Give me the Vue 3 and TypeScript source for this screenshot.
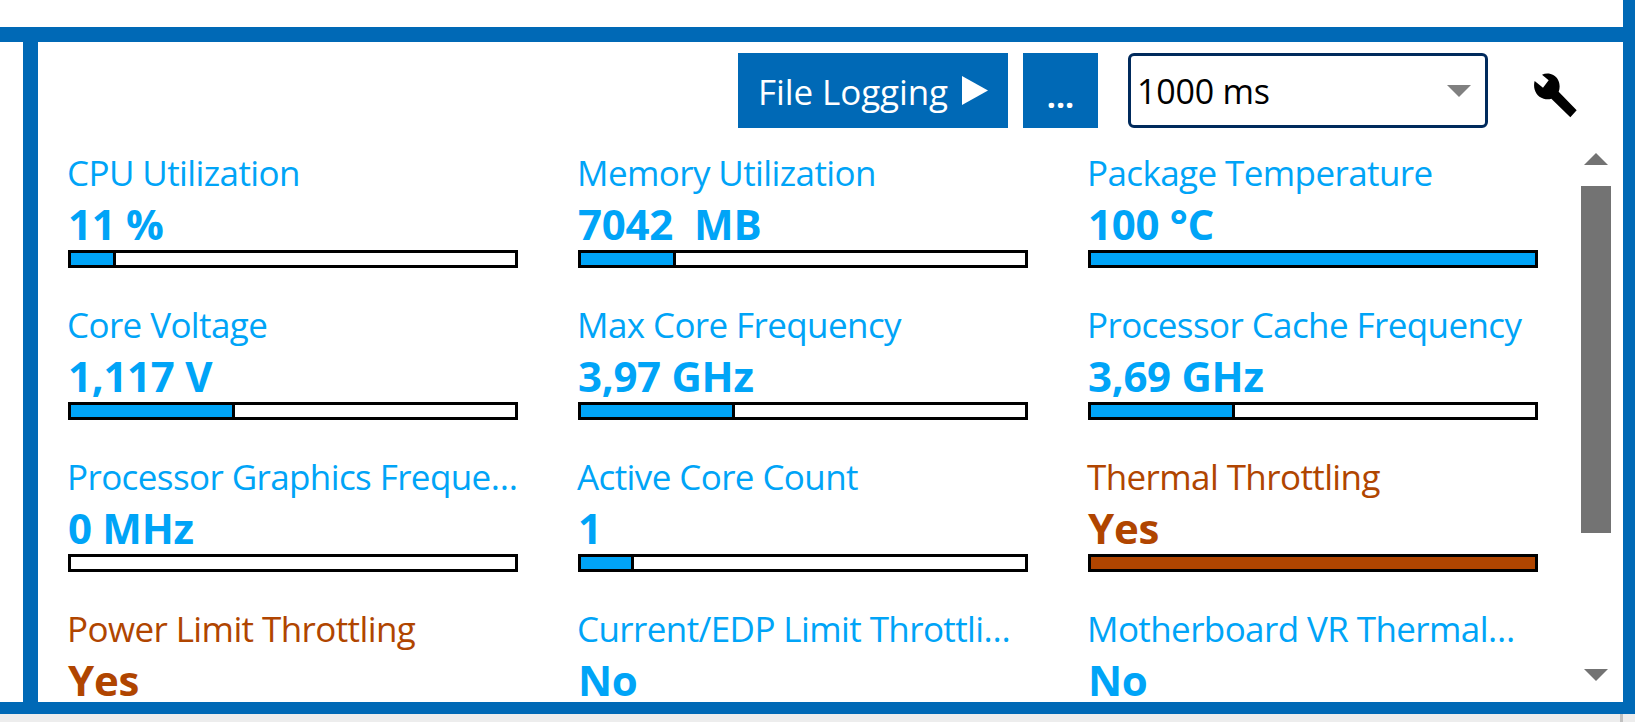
<script setup lang="ts">
interface Metric {
  label: string;
  value: string;
  pct?: number;
  alert?: boolean;
}

const metrics: Metric[] = [
  { label: 'CPU Utilization', value: '11 %', pct: 10.1 },
  { label: 'Memory Utilization', value: '7042\u00a0 MB', pct: 21.3 },
  { label: 'Package Temperature', value: '100 °C', pct: 100 },
  { label: 'Core Voltage', value: '1,117 V', pct: 36.9 },
  { label: 'Max Core Frequency', value: '3,97 GHz', pct: 34.7 },
  { label: 'Processor Cache Frequency', value: '3,69 GHz', pct: 32.4 },
  { label: 'Processor Graphics Freque…', value: '0 MHz', pct: 0 },
  { label: 'Active Core Count', value: '1', pct: 12 },
  { label: 'Thermal Throttling', value: 'Yes', pct: 100, alert: true },
  { label: 'Power Limit Throttling', value: 'Yes', pct: 100, alert: true },
  { label: 'Current/EDP Limit Throttli…', value: 'No', pct: 0 },
  { label: 'Motherboard VR Thermal…', value: 'No', pct: 0 },
];
</script>

<template>
  <div class="page">
    <div class="frame">
      <div class="top-space"></div>
      <div class="hbar top-bar"></div>
      <div class="middle">
        <div class="panel">
          <div class="toolbar">
            <button class="btn btn-log">
              <span>File Logging</span>
              <svg width="26" height="29" viewBox="0 0 26 29"><polygon points="0,0 26,14.5 0,29" fill="#fff" /></svg>
            </button>
            <button class="btn btn-more">...</button>
            <div class="select">
              <span>1000 ms</span>
              <svg width="24" height="12" viewBox="0 0 24 12"><polygon points="0,0 24,0 12,12" fill="#808080" /></svg>
            </div>
            <svg class="wrench" width="45" height="45" viewBox="400 128 135 135">
              <path d="M427 133 L447 150 L430 172 L405 152 C399 172 408 198 432 205 C440 207 448 207 455 205 L512 261 L531 240 L477 184 C484 165 478 145 462 135 C451 128 438 128 427 133 Z" fill="#000" />
            </svg>
          </div>
          <div class="body">
            <div class="grid">
              <div v-for="m in metrics" :key="m.label" class="metric" :class="{ alert: m.alert }">
                <div class="label">{{ m.label }}</div>
                <div class="value">{{ m.value }}</div>
                <div class="meter">
                  <div
                    class="fill"
                    :class="{ full: m.pct === 100, empty: !m.pct }"
                    :style="{ width: m.pct + '%' }"
                  ></div>
                </div>
              </div>
            </div>
            <div class="scrollbar">
              <svg width="24" height="12" viewBox="0 0 24 12"><polygon points="12,0 24,12 0,12" fill="#737373" /></svg>
              <div class="thumb"></div>
              <svg class="arrow-down" width="24" height="12" viewBox="0 0 24 12"><polygon points="0,0 24,0 12,12" fill="#737373" /></svg>
            </div>
          </div>
        </div>
      </div>
      <div class="hbar bottom-bar"></div>
    </div>
    <div class="footer"><div class="footer-mark"></div></div>
  </div>
</template>

<style>
html,
body {
  margin: 0;
  overflow: hidden;
}
</style>

<style scoped>
.page {
  width: 1635px;
  height: 722px;
  background: #ededed;
  display: flex;
  flex-direction: column;
  font-family: "Open Sans", "Noto Sans", sans-serif;
}
.frame {
  height: 714px;
  box-sizing: border-box;
  border-right: 12px solid #0069b6;
  background: #fff;
  display: flex;
  flex-direction: column;
}
.top-space {
  height: 27px;
  flex: none;
}
.hbar {
  flex: none;
  background: #0069b6;
}
.top-bar {
  height: 15px;
}
.bottom-bar {
  height: 12px;
}
.middle {
  flex: 1;
  min-height: 0;
  padding-left: 23px;
  display: flex;
}
.panel {
  flex: 1;
  min-width: 0;
  border-left: 15px solid #0069b6;
  display: flex;
  flex-direction: column;
}
.toolbar {
  flex: none;
  height: 75px;
  padding-top: 11px;
  padding-right: 45px;
  display: flex;
  justify-content: flex-end;
  align-items: flex-start;
}
.btn {
  height: 75px;
  border: none;
  padding: 0;
  background: #0069b6;
  color: #fff;
  font-family: inherit;
  display: flex;
  align-items: center;
  justify-content: center;
}
.btn-log {
  width: 270px;
  gap: 14px;
  font-size: 35px;
  letter-spacing: -0.1px;
}
.btn-log span {
  margin-top: 2px;
}
.btn-more {
  width: 75px;
  margin-left: 15px;
  padding-top: 10px;
  box-sizing: border-box;
  font-size: 32px;
  font-weight: 700;
}
.select {
  width: 360px;
  height: 75px;
  box-sizing: border-box;
  margin-left: 30px;
  border: 3px solid #002a5c;
  border-radius: 6px;
  padding: 0 14px 0 6px;
  display: flex;
  align-items: center;
  justify-content: space-between;
  font-size: 34px;
  letter-spacing: -0.2px;
  color: #000;
}
.wrench {
  margin-left: 45px;
  margin-top: 20px;
}
.body {
  flex: 1;
  min-height: 0;
  display: flex;
  overflow: hidden;
}
.grid {
  flex: 1;
  min-width: 0;
  padding: 20px 0 0 30px;
  display: grid;
  grid-template-columns: repeat(3, 450px);
  grid-auto-rows: 152px;
  column-gap: 60px;
}
.metric {
  color: #00a4f7;
  white-space: nowrap;
}
.metric.alert {
  color: #b04500;
}
.label {
  height: 52px;
  line-height: 50px;
  font-size: 35px;
  letter-spacing: -0.6px;
  margin-left: -1px;
}
.value {
  height: 50px;
  line-height: 48px;
  font-size: 42px;
  font-weight: 700;
  letter-spacing: -0.3px;
}
.meter {
  height: 18px;
  box-sizing: border-box;
  border: 3px solid #000;
  background: #fff;
}
.fill {
  height: 100%;
  box-sizing: border-box;
  background: #00a4f7;
  border-right: 3px solid #000;
}
.alert .fill {
  background: #b04500;
}
.fill.full,
.fill.empty {
  border-right: none;
}
.scrollbar {
  flex: none;
  width: 30px;
  margin-right: 12px;
  padding: 25px 0 21px;
  box-sizing: border-box;
  display: flex;
  flex-direction: column;
  align-items: center;
}
.thumb {
  flex: none;
  width: 30px;
  height: 347px;
  margin-top: 21px;
  background: #737373;
}
.arrow-down {
  margin-top: auto;
}
.footer {
  height: 8px;
  display: flex;
  justify-content: flex-end;
  padding-right: 12px;
}
.footer-mark {
  width: 3px;
  background: #c0c0c0;
}
</style>
